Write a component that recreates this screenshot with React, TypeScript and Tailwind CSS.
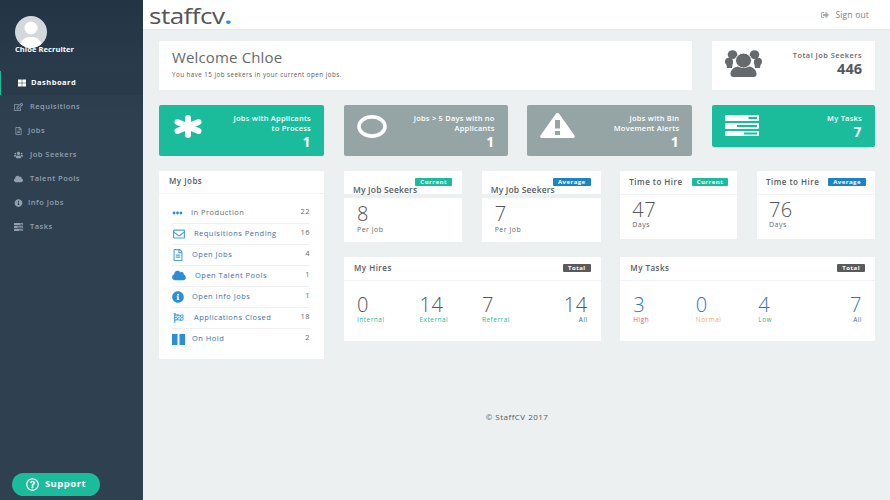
import React from "react";
import { FaThLarge, FaRegEdit, FaRegFileAlt, FaUsers, FaCloud, FaInfoCircle, FaEllipsisH, FaRegEnvelope, FaFlagCheckered, FaSignOutAlt, FaRegQuestionCircle } from "react-icons/fa";

type IconProps = { className?: string };

function TasksIcon({ className }: IconProps) {
  return (
    <svg viewBox="0 0 34 21" preserveAspectRatio="none" className={className} fill="currentColor">
      <path fillRule="evenodd" d="M0 1a1 1 0 0 1 1-1h32a1 1 0 0 1 1 1v4a1 1 0 0 1-1 1H1a1 1 0 0 1-1-1zM23.5 2h8.5v2h-8.5zM0 9a1 1 0 0 1 1-1h32a1 1 0 0 1 1 1v4a1 1 0 0 1-1 1H1a1 1 0 0 1-1-1zM12 10h20v2H12zM0 17a1 1 0 0 1 1-1h32a1 1 0 0 1 1 1v3a1 1 0 0 1-1 1H1a1 1 0 0 1-1-1zM19 17.5h13v2H19z" />
    </svg>
  );
}

function AsteriskIcon({ className }: IconProps) {
  return (
    <svg viewBox="0 0 28 23" className={className} stroke="currentColor" strokeWidth="6" strokeLinecap="round" fill="none">
      <path d="M14 3v17M3.5 7 24.5 16M3.5 16 24.5 7" />
    </svg>
  );
}

function RingIcon({ className }: IconProps) {
  return (
    <svg viewBox="0 0 30 23" className={className} fill="none" stroke="currentColor" strokeWidth="3.6">
      <ellipse cx="15" cy="11.5" rx="13" ry="9.6" />
    </svg>
  );
}

function WarningIcon({ className }: IconProps) {
  return (
    <svg viewBox="0 0 35 25" className={className} fill="currentColor">
      <path fillRule="evenodd" d="M15.5 1.2c.9-1.5 3.1-1.5 4 0l15 21.2c.8 1.2 0 2.6-1.5 2.6H2c-1.5 0-2.3-1.4-1.5-2.6zM15 7h5v8.5h-5zM15 18h5v4h-5z" />
    </svg>
  );
}

function PeopleIcon({ className }: IconProps) {
  return (
    <svg viewBox="0 0 37 27" className={className} fill="currentColor">
      <ellipse cx="7.5" cy="4.6" rx="4.8" ry="4.4" />
      <ellipse cx="29.5" cy="4.6" rx="4.8" ry="4.4" />
      <ellipse cx="4" cy="11.5" rx="4" ry="3.8" />
      <ellipse cx="33" cy="11.5" rx="4" ry="3.8" />
      <path d="M1 12h7l-1 6H2zM29 12h7l-1 6h-5z" />
      <ellipse cx="18.5" cy="10.5" rx="8" ry="7.4" stroke="#ffffff" strokeWidth="1" />
      <path d="M5.5 24c0-4 3-6.5 7-7.5 3.5 1.8 8.5 1.8 12 0 4 1 7 3.5 7 7.5 0 2-1 3-3 3H8.500c-2 0-3-1-3-3z" />
    </svg>
  );
}

function PauseIcon({ className }: IconProps) {
  return (
    <svg viewBox="0 0 13 11" className={className} fill="currentColor">
      <rect x="0" y="0" width="5.500" height="11" />
      <rect x="7.500" y="0" width="5.500" height="11" />
    </svg>
  );
}

const nav = [
  { label: "Requisitions", Icon: FaRegEdit, gap: "gap-[7px]" },
  { label: "Jobs", Icon: FaRegFileAlt, gap: "gap-[5px]" },
  { label: "Job Seekers", Icon: FaUsers, gap: "gap-[7px]" },
  { label: "Talent Pools", Icon: FaCloud, gap: "gap-[7px]" },
  { label: "Info Jobs", Icon: FaInfoCircle, gap: "gap-[5px]" },
  { label: "Tasks", Icon: TasksIcon, gap: "gap-[7px]" },
];

const jobs = [
  { label: "In Production", n: "22", Icon: FaEllipsisH, dark: true, w: "w-[19px]", ic: "w-[11px] h-[10px] text-[#2a8fd8]" },
  { label: "Requisitions Pending", n: "16", Icon: FaRegEnvelope, w: "w-[22px]", ic: "w-[14px] h-[12px] text-[#4da3e0]" },
  { label: "Open Jobs", n: "4", Icon: FaRegFileAlt, w: "w-[20px]", ic: "w-[12px] h-[12px] text-[#4da3e0]" },
  { label: "Open Talent Pools", n: "1", Icon: FaCloud, w: "w-[23px]", ic: "w-[14px] h-[11px] text-[#2a8fd8]" },
  { label: "Open Info Jobs", n: "1", Icon: FaInfoCircle, w: "w-[20px]", ic: "w-[12px] h-[12px] text-[#2a8fd8]" },
  { label: "Applications Closed", n: "18", Icon: FaFlagCheckered, w: "w-[22px]", ic: "w-[13px] h-[10px] text-[#4da3e0]" },
  { label: "On Hold", n: "2", Icon: PauseIcon, w: "w-[20px]", ic: "w-[13px] h-[11px] text-[#2a8fd8]" },
];

function Tile({ Icon, iconCls, title, n, bg, h, pl }: { Icon: React.ElementType; iconCls: string; title: React.ReactNode; n: string; bg: string; h: string; pl: string }) {
  return (
    <div className={`${bg} ${h} ${pl} rounded-[2px] flex items-start justify-between pr-[13px] pt-[8px] text-white`}>
      <Icon className={`${iconCls} shrink-0`} />
      <div className="text-right">
        <div className="text-[7.5px] leading-[10px] font-semibold whitespace-nowrap tracking-[0.03em]">{title}</div>
        <div className="text-[14px] leading-[17px] font-bold">{n}</div>
      </div>
    </div>
  );
}

function Badge({ children, color }: { children: React.ReactNode; color: string }) {
  return <span className={`${color} text-white text-[6px] font-bold leading-[8px] rounded-[1px] px-[5px] inline-block`}>{children}</span>;
}

function MiniCard({ title, badge, color, value, unit, overlap }: { title: string; badge: string; color: string; value: string; unit: string; overlap?: boolean }) {
  if (overlap) {
    return (
      <div className="h-[71px] flex flex-col">
        <div className="h-[23px] bg-white flex flex-col">
          <div className="flex justify-end pr-[10px] pt-[7px]"><Badge color={color}>{badge}</Badge></div>
          <div className="pl-[9px] text-[8.5px] leading-[11px] font-semibold text-[#555b60] whitespace-nowrap mt-[-2px] tracking-[0.02em]">{title}</div>
        </div>
        <div className="mt-[4px] bg-white h-[44px] pl-[13px] pt-[5px]">
          <div className="text-[20px] leading-[22px] font-light text-[#555]">{value}</div>
          <div className="text-[7px] leading-[9px] text-[#676a6c]">{unit}</div>
        </div>
      </div>
    );
  }
  return (
    <div className="h-[68px] bg-white flex flex-col">
      <div className="h-[24px] border-b border-[#f1f3f4] flex items-center justify-between pl-[9px] pr-[9px] pb-[2px]">
        <span className="text-[8px] font-semibold text-[#555b60] whitespace-nowrap">{title}</span>
        <Badge color={color}>{badge}</Badge>
      </div>
      <div className="pl-[12px] pt-[4px]">
        <div className="text-[20px] leading-[22px] font-light text-[#555]">{value}</div>
        <div className="text-[7px] leading-[8px] text-[#676a6c]">{unit}</div>
      </div>
    </div>
  );
}

function Totals({ title, items, blue }: { title: string; items: { n: string; l: string; c: string }[]; blue?: boolean }) {
  return (
    <div className="col-span-2 h-[84px] bg-white flex flex-col">
      <div className="h-[24px] border-b border-[#f1f3f4] flex items-center justify-between pl-[10px] pr-[10px] pb-[2px]">
        <span className="text-[8px] font-semibold text-[#555b60]">{title}</span>
        <Badge color="bg-[#5a5a5a]">Total</Badge>
      </div>
      <div className="flex pl-[13px] pr-[13px] pt-[13px]">
        {items.map((it, i) => (
          <div key={it.l} className={i === 3 ? "ml-auto text-right" : "w-[62.5px]"}>
            <div className={`text-[20px] leading-[22px] font-light ${blue ? "text-[#2f74b8]" : "text-[#555]"}`}>{it.n}</div>
            <div className={`text-[6.5px] leading-[8px] ${it.c}`}>{it.l}</div>
          </div>
        ))}
      </div>
    </div>
  );
}

export default function App() {
  return (
    <div className="w-[890px] h-[500px] overflow-hidden flex bg-[#ecf0f1] tracking-[0.03em]" style={{ fontFamily: '"Open Sans", sans-serif' }}>
      <aside className="w-[143px] h-full shrink-0 flex flex-col bg-[#2f4050] bg-gradient-to-b from-[#233444] to-[#2f4050] to-[25%]">
        <div className="h-[71px] pt-[16px] pl-[15px]">
          <div className="w-[32px] h-[32px] rounded-full bg-[#d4d8db] overflow-hidden">
            <svg viewBox="0 0 32 32" className="w-full h-full" fill="#ffffff">
              <circle cx="16" cy="12" r="6.5" />
              <path d="M5 32c0-8 5-10 8-11h6c3 1 8 3 8 11z" />
            </svg>
          </div>
          <div className="text-white text-[7.5px] leading-[10px] font-bold mt-[-4px] relative whitespace-nowrap tracking-[0.01em]">Chloe Recruiter</div>
        </div>
        <div className="h-[24px] bg-[#293a4a] border-l-[1.5px] border-[#1abc9c] flex items-center pl-[17px] gap-[5px] text-white">
          <FaThLarge className="text-[8px]" />
          <span className="text-[7.5px] font-bold">Dashboard</span>
        </div>
        {nav.map(({ label, Icon, gap }) => (
          <div key={label} className={`h-[24px] flex items-center pl-[14px] ${gap} text-[#8fa0b1]`}>
            <Icon className="w-[9px] h-[8px] shrink-0" />
            <span className="text-[7.5px] font-semibold">{label}</span>
          </div>
        ))}
        <div className="mt-auto mb-[4px] ml-[12px] w-[88px] h-[23px] rounded-full bg-[#1abc9c] flex items-center justify-center gap-[6px] text-white">
          <FaRegQuestionCircle className="text-[13px]" />
          <span className="text-[9.5px] font-bold">Support</span>
        </div>
      </aside>

      <div className="flex-1 flex flex-col min-w-0">
        <header className="h-[30px] bg-white flex items-start justify-between pl-[6px] pr-[21px] border-b border-[#e7eaec]">
          <div className="text-[26px] leading-[29px] text-[#555] tracking-[-0.5px] scale-y-[0.82] origin-[0_23px]">
            staffcv<span className="text-[#2a8fd8] font-bold">.</span>
          </div>
          <div className="flex items-center gap-[6px] text-[#7d8286] text-[8.5px] leading-[29px] tracking-[0.02em]">
            <FaSignOutAlt className="text-[8px] text-[#a8adb0]" />
            <span>Sign out</span>
          </div>
        </header>

        <main className="pl-[16px] pr-[15px] pt-[11px]">
          <div className="grid grid-cols-[165px_164px_165px_163px] gap-x-[19.67px]">
            <div className="col-span-3 h-[49px] bg-white pl-[13px] pt-[7px]">
              <div className="text-[15px] leading-[19px] text-[#676a6c] tracking-[0.01em]">Welcome Chloe</div>
              <div className="text-[6.2px] leading-[10px] text-[#55585a] mt-[3px]">You have 15 job seekers in your current open jobs.</div>
            </div>
            <div className="h-[49px] bg-white flex items-start justify-between pl-[13px] pr-[13px] pt-[9px]">
              <PeopleIcon className="text-[#666a6d] w-[37px] h-[27px] shrink-0" />
              <div className="text-right">
                <div className="text-[7.4px] leading-[10px] font-semibold text-[#676a6c]">Total Job Seekers</div>
                <div className="text-[14.5px] leading-[18px] font-bold text-[#55585a] tracking-normal">446</div>
              </div>
            </div>
          </div>

          <div className="grid grid-cols-[165px_164px_165px_163px] gap-x-[19.67px] mt-[15px] items-start">
            <Tile bg="bg-[#1abc9c]" h="h-[51px]" pl="pl-[15px]" Icon={AsteriskIcon} iconCls="w-[28px] h-[23px] mt-[2px]" title={<>Jobs with Applicants<br />to Process</>} n="1" />
            <Tile bg="bg-[#95a5a6]" h="h-[51px]" pl="pl-[13px]" Icon={RingIcon} iconCls="w-[30px] h-[23px] mt-[2px]" title={<>Jobs &gt; 5 Days with no<br />Applicants</>} n="1" />
            <Tile bg="bg-[#95a5a6]" h="h-[51px]" pl="pl-[13px]" Icon={WarningIcon} iconCls="w-[35px] h-[25px]" title={<>Jobs with Bin<br />Movement Alerts</>} n="1" />
            <Tile bg="bg-[#1abc9c]" h="h-[42px]" pl="pl-[13px]" Icon={TasksIcon} iconCls="w-[34px] h-[21px] mt-[2px]" title="My Tasks" n="7" />
          </div>

          <div className="flex gap-x-[20px] mt-[15px] items-start">
            <div className="w-[165px] shrink-0 h-[188px] bg-white">
              <div className="h-[23px] border-b border-[#f1f3f4] flex items-center pl-[10px] pb-[2px] text-[8px] font-semibold text-[#555b60]">My Jobs</div>
              <div className="ml-[13px] mr-[14px] mt-[8.500px]">
                {jobs.map(({ label, n, Icon, dark, w, ic }, i) => (
                  <div key={label} className={`h-[21px] flex items-center justify-between ${i < 6 ? "border-b border-[#eef0f1]" : ""}`}>
                    <div className="flex items-center">
                      <span className={`${w} shrink-0 flex items-center`}><Icon className={ic} /></span>
                      <span className={`text-[7.5px] ${dark ? "text-[#676a6c]" : "text-[#3d6fa8]"}`}>{label}</span>
                    </div>
                    <span className="text-[7.5px] text-[#676a6c] mt-[-2px]">{n}</span>
                  </div>
                ))}
              </div>
            </div>

            <div className="flex-1 grid grid-cols-[118px_119px_117px_118px] gap-x-[19.67px] gap-y-[15px] items-start">
              <MiniCard overlap title="My Job Seekers" badge="Current" color="bg-[#1abc9c]" value="8" unit="Per Job" />
              <MiniCard overlap title="My Job Seekers" badge="Average" color="bg-[#1c84c6]" value="7" unit="Per Job" />
              <MiniCard title="Time to Hire" badge="Current" color="bg-[#1abc9c]" value="47" unit="Days" />
              <MiniCard title="Time to Hire" badge="Average" color="bg-[#1c84c6]" value="76" unit="Days" />
              <Totals title="My Hires" items={[
                { n: "0", l: "Internal", c: "text-[#1abc9c]" },
                { n: "14", l: "External", c: "text-[#1abc9c]" },
                { n: "7", l: "Referral", c: "text-[#1abc9c]" },
                { n: "14", l: "All", c: "text-[#3d6fa8]" },
              ]} />
              <Totals blue title="My Tasks" items={[
                { n: "3", l: "High", c: "text-[#ed5565]" },
                { n: "0", l: "Normal", c: "text-[#f8ac59]" },
                { n: "4", l: "Low", c: "text-[#1abc9c]" },
                { n: "7", l: "All", c: "text-[#3d6fa8]" },
              ]} />
            </div>
          </div>

          <div className="text-center text-[8px] text-[#55585a] mt-[52px]">© StaffCV 2017</div>
        </main>
      </div>
    </div>
  );
}
